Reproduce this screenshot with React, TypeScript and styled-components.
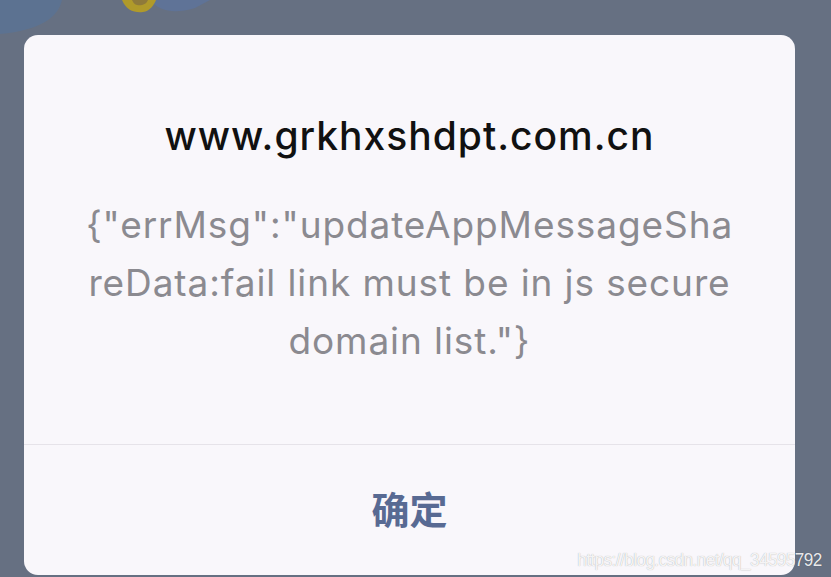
import React from 'react';
import styled, { createGlobalStyle } from 'styled-components';

const GlobalStyle = createGlobalStyle`
    html, body {
        margin: 0;
        padding: 0;
        background: #667082;
    }
    body {
        font-family: Inter, Roboto, "Noto Sans", "Noto Sans CJK SC", sans-serif;
    }
`;

const messageLines = [
    '{"errMsg":"updateAppMessageSha',
    'reData:fail link must be in js secure',
    'domain list."}',
];

export default function App(): JSX.Element {
    return (
        <Screen>
            <GlobalStyle />
            <Backdrop>
                <svg width="831" height="35" viewBox="0 0 831 35">
                    <path d="M0 0 H62 C58 18 40 30 0 34 Z" fill="#5a7395" opacity="0.8" />
                    <path d="M150 0 C160 12 175 14 195 8 L210 0 Z" fill="#5f7397" />
                    <path d="M122 0 C126 10 134 13 143 12 C150 11 154 5 156 0 Z" fill="#b09a2a" />
                    <path d="M132 0 C134 5 138 6 142 5 C146 4 147 2 148 0 Z" fill="#8f7a3a" />
                </svg>
            </Backdrop>
            <Dialog>
                <Body>
                    <Title>www.grkhxshdpt.com.cn</Title>
                    <Message>
                        {messageLines.map((line) => (
                            <MessageLine key={line}>{line}</MessageLine>
                        ))}
                    </Message>
                </Body>
                <Footer>
                    <ConfirmButton>确定</ConfirmButton>
                </Footer>
            </Dialog>
            <Watermark>https://blog.csdn.net/qq_34595792</Watermark>
        </Screen>
    );
}

const Screen = styled.div`
    position: relative;
    width: 831px;
    height: 577px;
    overflow: hidden;
    background: #667082;
`;

const Backdrop = styled.div`
    height: 35px;
    line-height: 0;
`;

const Dialog = styled.div`
    width: 771px;
    height: 540px;
    margin-left: 24px;
    background: #f9f7fb;
    border-radius: 14px;
    display: flex;
    flex-direction: column;
    overflow: hidden;
`;

const Body = styled.div`
    padding: 79px 20px 0;
    height: 330px;
    display: flex;
    flex-direction: column;
    align-items: center;
    border-bottom: 1px solid #e6e3e9;
`;

const Title = styled.div`
    font-size: 39px;
    line-height: 44px;
    font-weight: 500;
    letter-spacing: 1px;
    color: #111111;
    margin-bottom: 38px;
`;

const Message = styled.div`
    display: flex;
    flex-direction: column;
    align-items: center;
`;

const MessageLine = styled.div`
    font-size: 37px;
    line-height: 58px;
    font-weight: 400;
    letter-spacing: 0.9px;
    color: #8b8a90;
    white-space: nowrap;
`;

const Footer = styled.div`
    flex: 1;
    display: flex;
    justify-content: center;
    align-items: center;
    padding-bottom: 6px;
`;

const ConfirmButton = styled.button`
    border: none;
    background: none;
    font-family: "Noto Sans CJK SC", sans-serif;
    font-size: 38px;
    font-weight: 700;
    color: #586a93;
    padding: 0;
    cursor: pointer;
`;

const Watermark = styled.div`
    position: absolute;
    right: 9px;
    bottom: 6px;
    font-family: "Liberation Sans", sans-serif;
    font-size: 19px;
    letter-spacing: -0.6px;
    color: rgba(255, 255, 255, 0.9);
    text-shadow: 0 0 1px rgba(0, 0, 0, 0.35);
    transform: scaleX(0.9);
    transform-origin: right center;
`;
